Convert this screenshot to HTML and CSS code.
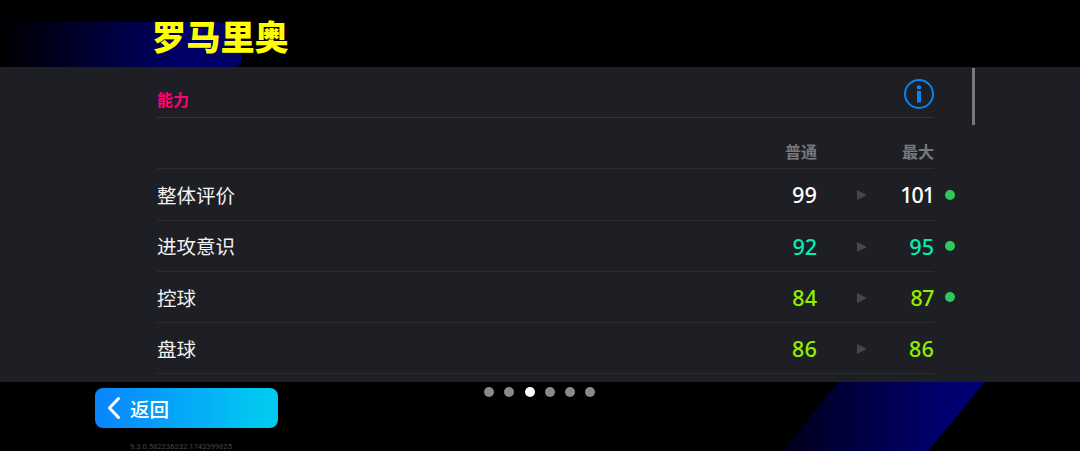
FILE: index.html
```html
<!DOCTYPE html>
<html lang="zh-CN">
<head>
    <meta charset="UTF-8">
    <meta name="viewport" content="width=device-width, initial-scale=1.0">
    <title>罗马里奥</title>
    <link rel="stylesheet" href="styles.css">
</head>
<body>

<div class="screen">
    <div class="deco-top"></div>
    <div class="deco-bottom"></div>

    <header class="title-bar">
        <h1>罗马里奥</h1>
    </header>

    <main class="panel">
        <div class="scrollbar"></div>
        <div class="stats">
            <div class="section-head">
                <h2>能力</h2>
                <svg class="info-icon" viewBox="0 0 30 30" width="30" height="30">
                    <circle cx="15" cy="15" r="14" fill="none" stroke="#0a84f0" stroke-width="2"/>
                    <rect x="13" y="12" width="4" height="11.5" fill="#0a84f0"/>
                    <circle cx="15" cy="8.4" r="2.2" fill="#0a84f0"/>
                </svg>
            </div>
            <div class="row row-head">
                <span></span>
                <span class="num">普通</span>
                <span></span>
                <span class="num">最大</span>
            </div>
            <div class="row">
                <span class="label">整体评价</span>
                <span class="num val-white">99</span>
                <span class="arrow"></span>
                <span class="num val-white">101</span>
                <span class="dot"></span>
            </div>
            <div class="row">
                <span class="label">进攻意识</span>
                <span class="num val-teal">92</span>
                <span class="arrow"></span>
                <span class="num val-teal">95</span>
                <span class="dot"></span>
            </div>
            <div class="row">
                <span class="label">控球</span>
                <span class="num val-lime">84</span>
                <span class="arrow"></span>
                <span class="num val-lime">87</span>
                <span class="dot"></span>
            </div>
            <div class="row">
                <span class="label">盘球</span>
                <span class="num val-lime">86</span>
                <span class="arrow"></span>
                <span class="num val-lime">86</span>
            </div>
        </div>
    </main>

    <footer class="bottom-bar">
        <div class="bottom-left">
            <button class="back-btn">
                <svg viewBox="0 0 14 24" width="15" height="24">
                    <path d="M12 2.5 L3 12 L12 21.5" fill="none" stroke="#fff" stroke-width="3" stroke-linecap="round" stroke-linejoin="round"/>
                </svg>
                <span>返回</span>
            </button>
            <div class="version">9.3.0.582236232.1743399825</div>
        </div>
        <div class="pager">
            <span></span>
            <span></span>
            <span class="active"></span>
            <span></span>
            <span></span>
            <span></span>
        </div>
    </footer>
</div>

</body>
</html>
```

FILE: styles.css
```css
* {
    box-sizing: border-box;
}
html, body {
    margin: 0;
    padding: 0;
    background: #000;
}
.screen {
    position: relative;
    width: 1080px;
    height: 451px;
    overflow: hidden;
    background: #000;
    font-family: "Noto Sans CJK SC", "Noto Sans", sans-serif;
}
.deco-top {
    position: absolute;
    left: 0;
    top: 22px;
    width: 242px;
    height: 45px;
    border-radius: 0 26px 8px 0 / 0 36px 9px 0;
    background: linear-gradient(90deg, #000 0%, #000066 75%);
}
.deco-bottom {
    position: absolute;
    left: 783px;
    top: 382px;
    width: 202px;
    height: 69px;
    clip-path: polygon(55px 0, 202px 0, 145px 69px, 0 69px);
    background: linear-gradient(90deg, #00001a 0%, #000070 80%);
}
.title-bar {
    position: relative;
    height: 67px;
    padding: 10px 0 0 152px;
}
.title-bar h1 {
    margin: 0;
    font-size: 34.2px;
    line-height: 50px;
    font-weight: 900;
    color: #ffff00;
}
.panel {
    position: relative;
    height: 315px;
    padding-left: 157px;
    background: #1e1f24;
}
.scrollbar {
    position: absolute;
    left: 972px;
    top: 1px;
    width: 3px;
    height: 57px;
    background: #77787c;
}
.stats {
    width: 777px;
}
.section-head {
    display: flex;
    align-items: center;
    justify-content: space-between;
    height: 51px;
    padding-top: 4px;
    border-bottom: 1px solid #33343a;
}
.section-head h2 {
    margin: 0;
    padding-top: 10px;
    font-size: 16px;
    font-weight: 700;
    color: #ff0078;
}
.info-icon {
    display: block;
}
.row {
    position: relative;
    display: grid;
    grid-template-columns: 1fr 60px 50px 67px;
    align-items: center;
    height: 51.3px;
    border-bottom: 1px solid #2c2d32;
}
.label {
    font-size: 19.5px;
    color: #f2f2f2;
}
.num {
    padding-top: 1px;
    text-align: right;
    font-family: "Noto Sans", sans-serif;
    font-size: 21.5px;
    font-weight: 500;
    font-variant-numeric: proportional-nums;
}
.row-head {
    padding-top: 16px;
}
.row-head .num {
    padding-top: 0;
    font-family: "Noto Sans CJK SC", sans-serif;
    font-size: 16px;
    font-weight: 700;
    color: #77787c;
}
.val-white {
    color: #fff;
}
.val-teal {
    color: #00f0b4;
}
.val-lime {
    color: #90f000;
}
.arrow {
    justify-self: start;
    margin: 2px 0 0 40px;
    width: 0;
    height: 0;
    border-left: 10px solid #45464e;
    border-top: 5.5px solid transparent;
    border-bottom: 5.5px solid transparent;
}
.dot {
    position: absolute;
    left: 788px;
    top: 20.5px;
    width: 10px;
    height: 10px;
    border-radius: 50%;
    background: #30c85a;
}
.bottom-bar {
    position: relative;
    display: flex;
    padding: 6px 0 0 95px;
}
.bottom-left {
    width: 183px;
}
.back-btn {
    display: flex;
    align-items: center;
    gap: 9px;
    width: 183px;
    height: 40px;
    padding: 0 0 0 11px;
    border: none;
    border-radius: 8px;
    background: linear-gradient(90deg, #0a84ff 0%, #00c8f0 90%);
    color: #fff;
    font-family: inherit;
    font-size: 19.5px;
    font-weight: 500;
}
.version {
    margin: 14px 0 0 35px;
    font-family: "Roboto", sans-serif;
    font-size: 7.6px;
    line-height: 10px;
    white-space: nowrap;
    color: #444;
}
.pager {
    display: flex;
    gap: 10.3px;
    margin: -1px 0 0 206px;
    height: 10px;
}
.pager span {
    width: 10px;
    height: 10px;
    border-radius: 50%;
    background: #8a8a8e;
}
.pager .active {
    background: #fff;
}
```
